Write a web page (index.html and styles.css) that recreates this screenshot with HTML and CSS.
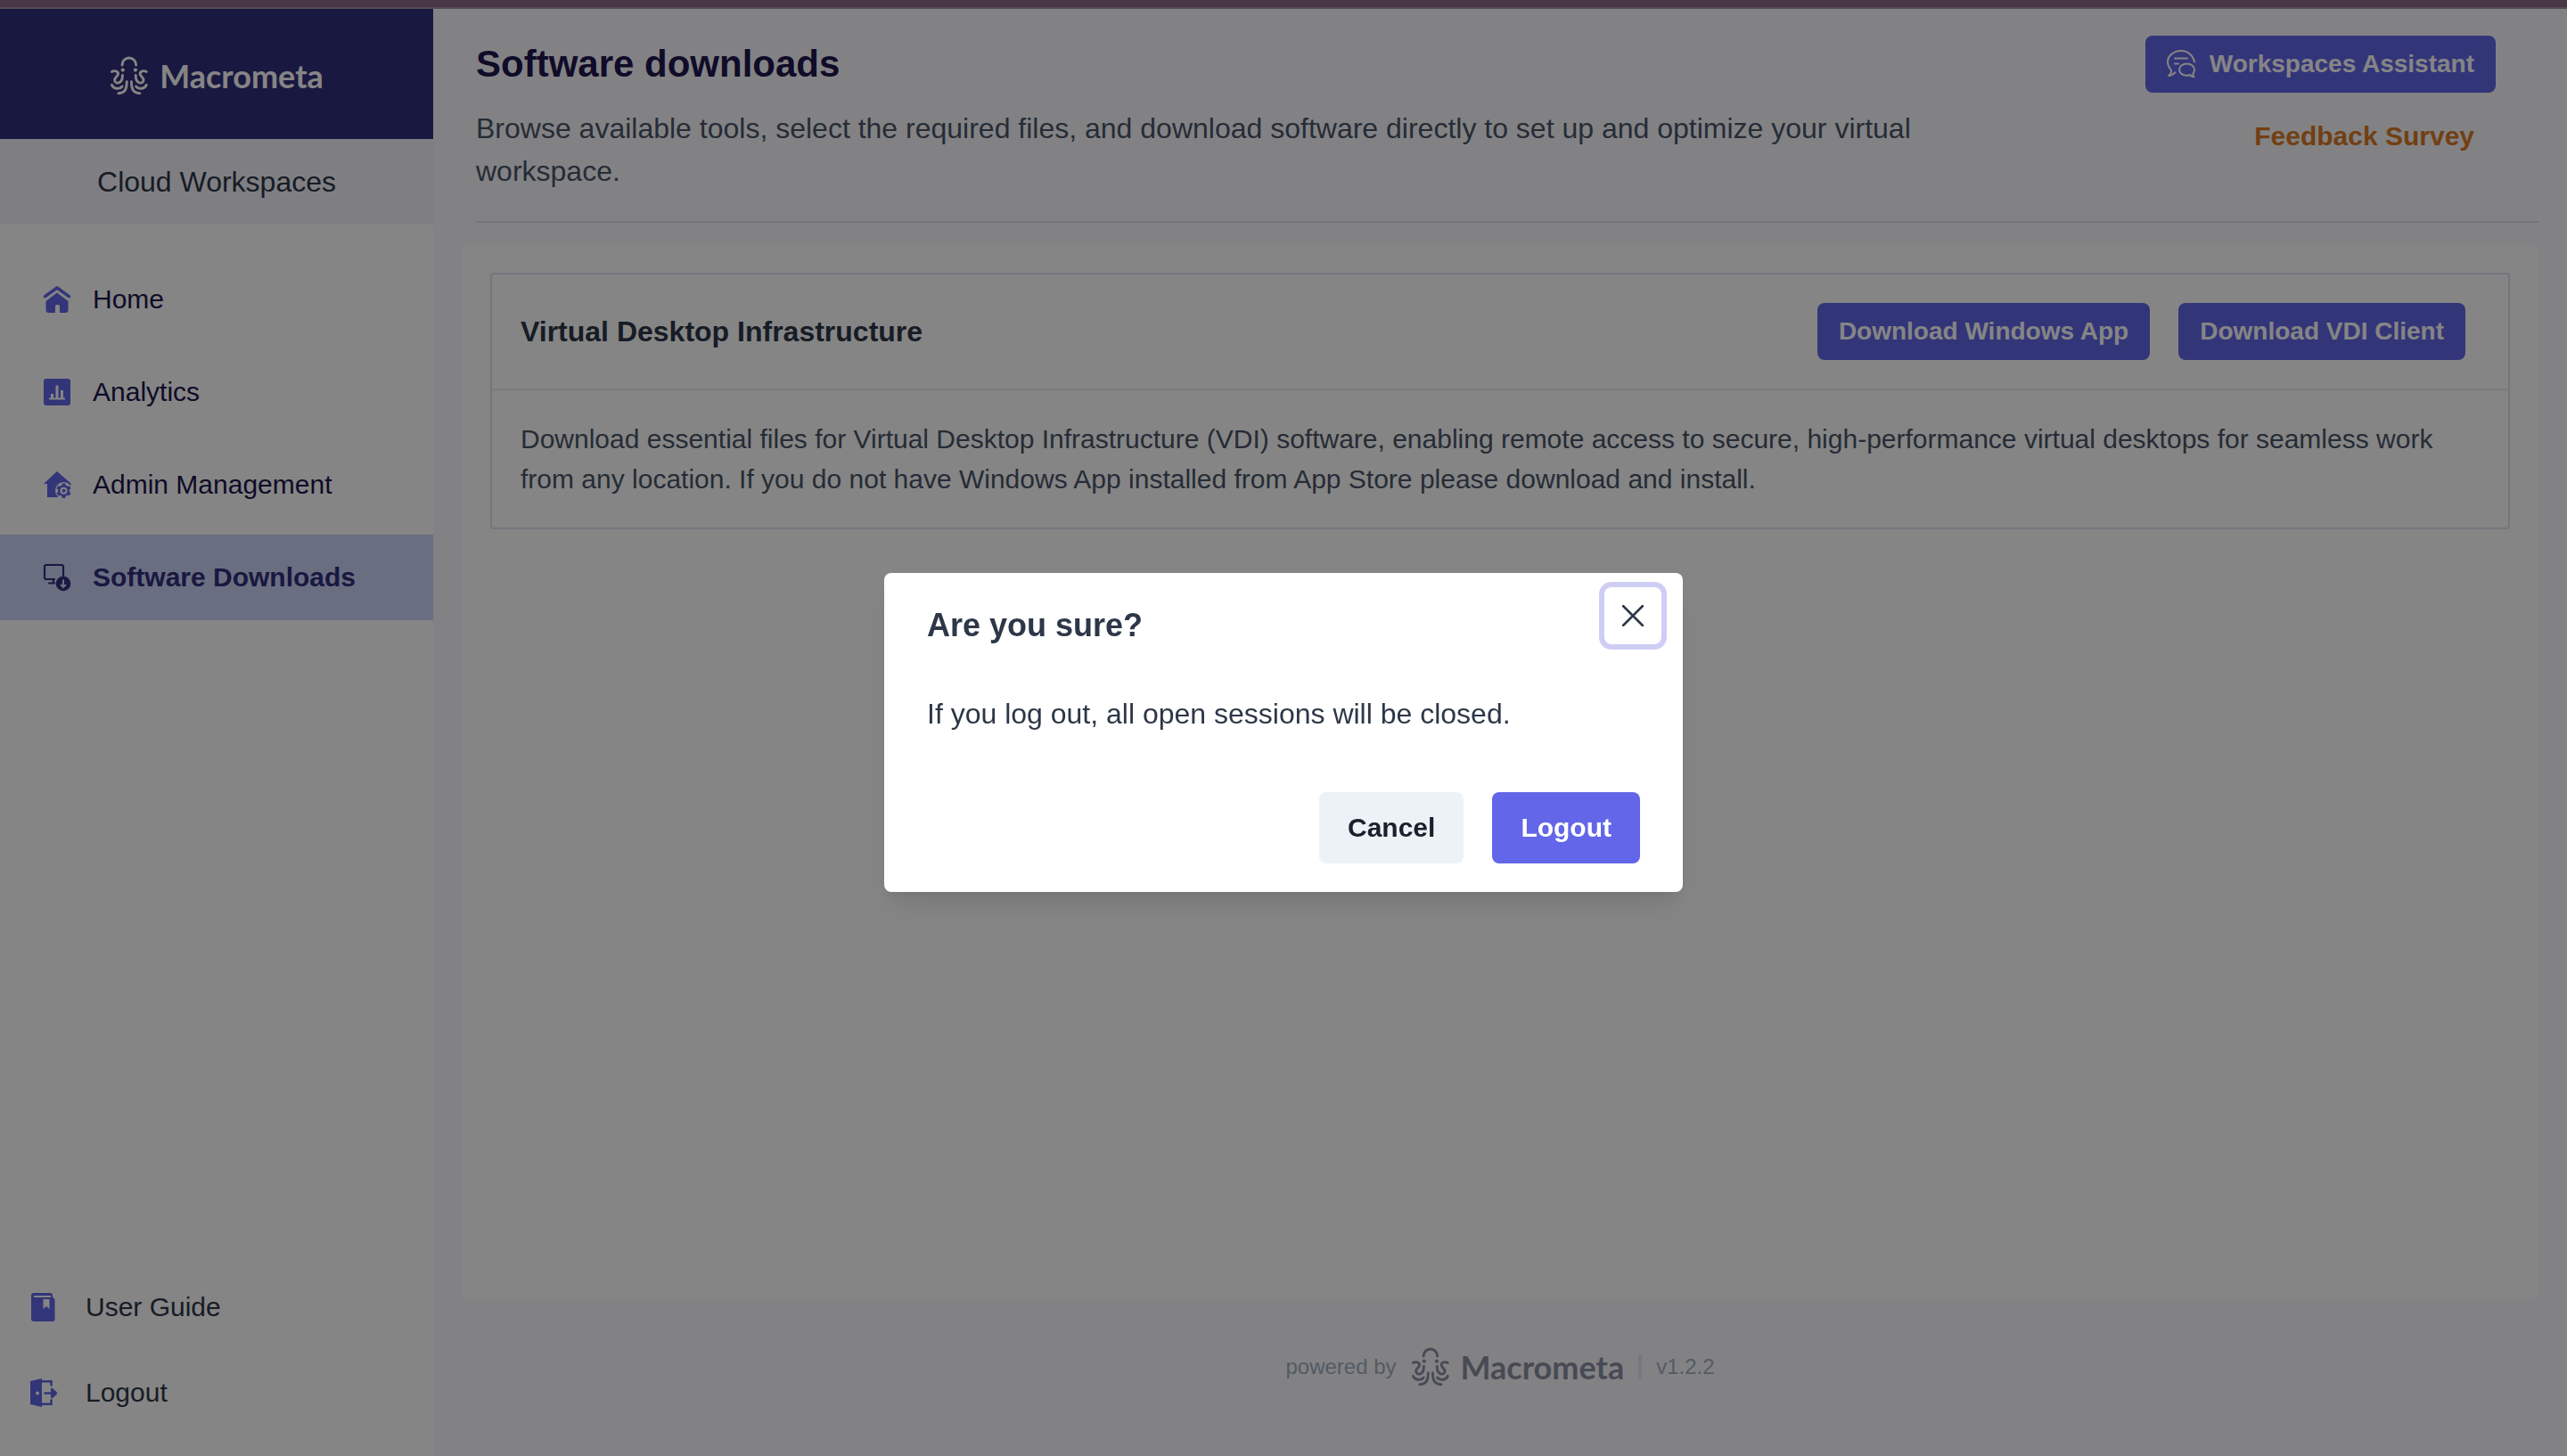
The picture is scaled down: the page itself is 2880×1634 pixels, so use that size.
FILE: index.html
```html
<!DOCTYPE html>
<html lang="en">
<head>
<meta charset="utf-8">
<meta name="viewport" content="width=device-width, initial-scale=1">
<title>Software downloads</title>
<link rel="stylesheet" href="styles.css">
</head>
<body>
<svg class="defs" aria-hidden="true">
  <symbol id="octopus" viewBox="372 186 135 136">
    <g fill="none" stroke="currentColor" stroke-width="9" stroke-linecap="round" stroke-linejoin="round">
      <path d="M415 217v-1a24 24 0 0 1 48 0v1"/>
      <path d="M379 240C387 235 402 237 401 248C400 256 389 259 389 269C389 285 417 284 416 252"/>
      <path d="M379 286C385 300 405 303 415 291"/>
      <path d="M402 315C424 314 431 302 431 275"/>
      <path d="M499 240C491 235 476 237 477 248C478 256 489 259 489 269C489 285 461 284 462 252"/>
      <path d="M499 286C493 300 473 303 463 291"/>
      <path d="M476 315C454 314 447 302 447 275"/>
    </g>
    <circle cx="417" cy="234" r="6.500" fill="currentColor"/>
    <circle cx="461" cy="234" r="6.500" fill="currentColor"/>
  </symbol>
</svg>

<div class="accent"></div>
<div class="app">
  <aside class="sidebar">
    <a class="brand" href="#"><svg class="brand-mark"><use href="#octopus"/></svg><span class="wordmark">Macrometa</span></a>
    <div class="product">Cloud Workspaces</div>
    <nav class="nav">
      <a class="nav-item" href="#">
        <svg class="icon" viewBox="0 0 32 32" fill="currentColor"><path d="M2.600 12.600L16 3l13.400 9.600" fill="none" stroke="currentColor" stroke-width="3.600" stroke-linecap="round" stroke-linejoin="round"/><path d="M16 8.500L28.500 18v10a3 3 0 0 1-3 3H19v-7.500a1.500 1.500 0 0 0-1.500-1.500h-2a1.500 1.500 0 0 0-1.500 1.500V31H6.500a3 3 0 0 1-3-3V18z"/></svg>
        Home</a>
      <a class="nav-item" href="#">
        <svg class="icon" viewBox="0 0 32 32"><rect x="1" y="1" width="30" height="30" rx="3" fill="currentColor"/><path class="cutout" d="M7 22.500h18v2H7zM9 18h3v5H9zM14.500 8.500h3V23h-3zM20 14h3v9h-3z"/></svg>
        Analytics</a>
      <a class="nav-item" href="#">
        <svg class="icon" viewBox="0 0 32 32"><path d="M16 1l15.500 13.500V17H28v13H5V15H1z" fill="currentColor"/><circle cx="23.500" cy="22.500" r="9.500" class="cutout"/><g fill="currentColor"><path d="M21.600 14.500h3.800v16.500h-3.800z"/><path d="M21.600 14.500h3.800v16.500h-3.800z" transform="rotate(60 23.500 22.700)"/><path d="M21.600 14.500h3.800v16.500h-3.800z" transform="rotate(120 23.500 22.700)"/><circle cx="23.500" cy="22.700" r="6.500"/></g><circle cx="23.500" cy="22.700" r="3" fill="none" class="cutout-line gear-hole"/></svg>
        Admin Management</a>
      <a class="nav-item active" href="#" aria-current="page">
        <svg class="icon" viewBox="0 0 32 32"><path d="M23 14V4a2 2 0 0 0-2-2H4a2 2 0 0 0-2 2v12a2 2 0 0 0 2 2h9M7 22.500h6M12 18v4" fill="none" stroke="currentColor" stroke-width="2.200" stroke-linecap="round"/><circle cx="23" cy="23" r="8.300" fill="currentColor"/><path d="M23 18.500v8M20 24l3 3 3-3" fill="none" class="cutout-line active-line"/></svg>
        Software Downloads</a>
    </nav>
    <nav class="nav-bottom">
      <a class="bottom-item" href="#">
        <svg class="icon" viewBox="0 0 32 32"><path d="M6 0h18a3 3 0 0 1 3 3v2a3 3 0 0 1 2.500 3v21.500a2.500 2.500 0 0 1-2.500 2.500H6a3 3 0 0 1-3-3V3a3 3 0 0 1 3-3z" fill="currentColor"/><path class="cutout" d="M6 3h19v2H6zM16.500 7h7v11l-3.500-3-3.500 3z"/></svg>
        User Guide</a>
      <a class="bottom-item" href="#">
        <svg class="icon" viewBox="0 0 32 32"><path d="M2 3l13-3v32L2 29z" fill="currentColor"/><circle cx="10" cy="16.500" r="2" class="cutout"/><path d="M15 3.200h10.500V7.500M15 28.800h10.500V24.500M18.500 16.500h8" fill="none" stroke="currentColor" stroke-width="2.600" stroke-linecap="round"/><path d="M25 11.500q.5-1.500 2-.5l4.500 4q1 1.500 0 3l-4.500 4q-1.500 1-2-.5z" fill="currentColor"/></svg>
        Logout</a>
    </nav>
  </aside>

  <main class="main">
    <header class="page-head">
      <div class="page-intro">
        <h1 class="page-title">Software downloads</h1>
        <p class="page-text">Browse available tools, select the required files, and download software directly to set up and optimize your virtual workspace.</p>
      </div>
      <div class="page-actions">
        <button class="btn btn-primary" type="button">
          <svg class="icon" viewBox="0 0 32 32" fill="none" stroke="currentColor" stroke-width="2" stroke-linecap="round" stroke-linejoin="round"><path d="M31 13.500C29.500 6 23.500 1 16 1 8 1 1 6.500 1 13.500c0 4 2 7 4 9.500.5 2-1 4.500-3 6 3 0 5-1.500 7.500-3.800"/><path d="M9 9.500h14M9 15.500h4"/><path d="M22.500 15.500c-5 0-8.500 3-8.500 6.700s3.500 6.600 8.500 6.600c1.500 0 2.500-.3 3.500-.8 1.500 1.500 3 2.300 4.500 2.300-1-1.300-1.300-2.500-1-4C30.500 25 31 23.500 31 22c0-3.500-3.500-6.500-8.500-6.500z"/></svg>
          Workspaces Assistant</button>
        <a class="survey" href="#">Feedback Survey</a>
      </div>
    </header>

    <section class="panel">
      <article class="card">
        <header class="card-head">
          <h2 class="card-title">Virtual Desktop Infrastructure</h2>
          <div class="card-actions">
            <button class="btn btn-primary" type="button">Download Windows App</button>
            <button class="btn btn-primary" type="button">Download VDI Client</button>
          </div>
        </header>
        <p class="card-text">Download essential files for Virtual Desktop Infrastructure (VDI) software, enabling remote access to secure, high-performance virtual desktops for seamless work from any location. If you do not have Windows App installed from App Store please download and install.</p>
      </article>
    </section>

    <footer class="footer">
      <span>powered by</span>
      <span class="footer-brand"><svg class="brand-mark"><use href="#octopus"/></svg><span class="wordmark">Macrometa</span></span>
      <span class="footer-rule"></span>
      <span>v1.2.2</span>
    </footer>
  </main>
</div>

<div class="overlay">
  <section class="modal" role="dialog" aria-modal="true" aria-labelledby="modal-title">
    <h2 class="modal-title" id="modal-title">Are you sure?</h2>
    <button class="modal-close" type="button" aria-label="Close"><svg class="close-icon" viewBox="0 0 24 24"><path d="M1 1l22 22M23 1L1 23" fill="none" stroke="currentColor" stroke-width="2.600" stroke-linecap="round"/></svg></button>
    <p class="modal-text">If you log out, all open sessions will be closed.</p>
    <div class="modal-actions">
      <button class="btn btn-large btn-plain" type="button">Cancel</button>
      <button class="btn btn-large btn-primary" type="button">Logout</button>
    </div>
  </section>
</div>
</body>
</html>
```
FILE: styles.css
```css
* {
  box-sizing: border-box;
  margin: 0;
}

body {
  display: flex;
  flex-direction: column;
  min-height: 100vh;
  font-family: "Liberation Sans", Arial, sans-serif;
  font-size: 30px;
  color: #2d3748;
  background: #fafafe;
}

a {
  color: inherit;
  text-decoration: none;
}

.defs {
  display: none;
}

.accent {
  height: 10px;
  background: #8b6684;
  border-bottom: 2px solid #a096a0;
}

.app {
  flex: 1;
  display: flex;
}

.icon {
  flex: none;
  width: 32px;
  height: 32px;
}

.cutout {
  fill: #fff;
}

.cutout-line {
  stroke: #fff;
  stroke-width: 2;
}

/* Sidebar */

.sidebar {
  flex: none;
  width: 486px;
  display: flex;
  flex-direction: column;
  background: #fff;
}

.brand {
  display: flex;
  align-items: center;
  justify-content: center;
  gap: 12px;
  height: 146px;
  padding-top: 4px;
  color: #fff;
  background: #312e7c;
}

.brand-mark {
  width: 44px;
  height: 44px;
}

.wordmark {
  font-family: Lato, "Open Sans", sans-serif;
  font-size: 36px;
  line-height: 44px;
  font-weight: 700;
}

.product {
  padding: 24px;
  font-size: 32px;
  line-height: 48px;
  text-align: center;
  background: #f4f3fb;
}

.nav {
  display: flex;
  flex-direction: column;
  gap: 8px;
  padding-top: 36px;
  color: #20164e;
}

.nav-item,
.bottom-item {
  display: flex;
  align-items: center;
  height: 96px;
}

.nav-item {
  gap: 24px;
  padding: 0 48px;
}

.nav-item .icon,
.bottom-item .icon {
  color: #6366e8;
}

.nav-item.active {
  font-weight: 700;
  color: #312e7c;
  background: #cbd3f7;
}

.nav-item.active .icon {
  color: #312e7c;
}

.active-line {
  stroke: #cbd3f7;
}

.nav-bottom {
  margin-top: auto;
  padding-bottom: 23px;
}

.bottom-item {
  gap: 32px;
  padding: 0 32px;
}

/* Buttons */

.btn {
  display: inline-flex;
  align-items: center;
  justify-content: center;
  gap: 16px;
  height: 64px;
  padding: 0 24px;
  border: 0;
  border-radius: 8px;
  font-family: inherit;
  font-size: 28px;
  font-weight: 700;
  white-space: nowrap;
}

.btn-primary {
  color: #fff;
  background: #6366e8;
}

.btn-plain {
  color: #1a202c;
  background: #edf2f7;
}

.btn-large {
  height: 80px;
  padding: 0 32px;
  font-size: 30px;
}

/* Page */

.main {
  flex: 1;
  min-width: 0;
  display: flex;
  flex-direction: column;
  padding: 30px 32px 0;
}

.page-head {
  display: flex;
  justify-content: space-between;
  align-items: flex-start;
  margin-left: 16px;
  padding-bottom: 32px;
  border-bottom: 2px solid #dfdfee;
}

.page-intro {
  width: 75%;
}

.page-title {
  margin-bottom: 16px;
  font-size: 42px;
  line-height: 64px;
  color: #20164e;
}

.page-text {
  font-size: 32px;
  line-height: 48px;
  color: #4a5568;
}

.page-actions {
  display: flex;
  flex-direction: column;
  align-items: flex-end;
  gap: 25px;
  padding-right: 48px;
}

.survey {
  padding: 0 24px;
  line-height: 48px;
  font-weight: 700;
  color: #d97a25;
}

.panel {
  flex: 1;
  margin-top: 24px;
  padding: 32px;
  border-radius: 10px;
  background: #fff;
}

.card {
  border: 2px solid #dde5ee;
  border-radius: 4px;
}

.card-head {
  display: flex;
  justify-content: space-between;
  align-items: center;
  padding: 32px 48px 32px 32px;
  border-bottom: 2px solid #ececf1;
}

.card-title {
  font-size: 32px;
}

.card-actions {
  display: flex;
  gap: 32px;
}

.card-text {
  padding: 32px;
  line-height: 45px;
  color: #4a5568;
}

.footer {
  display: flex;
  align-items: center;
  justify-content: center;
  gap: 16px;
  padding: 54px 0 78px;
  font-size: 24px;
  color: #a0aec0;
}

.footer-brand {
  display: flex;
  align-items: center;
  gap: 12px;
  color: #8b8ea1;
}

.footer-rule {
  width: 4px;
  height: 28px;
  background: #e8e8ec;
}

/* Log out confirmation */

.overlay {
  position: fixed;
  inset: 0;
  display: flex;
  align-items: center;
  justify-content: center;
  padding-top: 10px;
  background: rgba(0, 0, 0, 0.48);
}

.modal {
  position: relative;
  width: 896px;
  max-width: 90%;
  padding: 32px 48px;
  border-radius: 8px;
  background: #fff;
  box-shadow: 0 20px 30px -6px rgba(0, 0, 0, 0.1), 0 8px 12px -4px rgba(0, 0, 0, 0.05);
}

.modal-title {
  font-size: 36px;
  line-height: 54px;
}

.modal-close {
  position: absolute;
  top: 16px;
  right: 24px;
  display: flex;
  align-items: center;
  justify-content: center;
  width: 64px;
  height: 64px;
  padding: 0;
  border: 0;
  border-radius: 8px;
  color: #2d3748;
  background: #fff;
  box-shadow: 0 0 0 6px #cecef5;
}

.close-icon {
  width: 24px;
  height: 24px;
}

.modal-text {
  margin: 48px 0 64px;
  font-size: 32px;
  line-height: 48px;
}

.modal-actions {
  display: flex;
  justify-content: flex-end;
  gap: 32px;
}
```
